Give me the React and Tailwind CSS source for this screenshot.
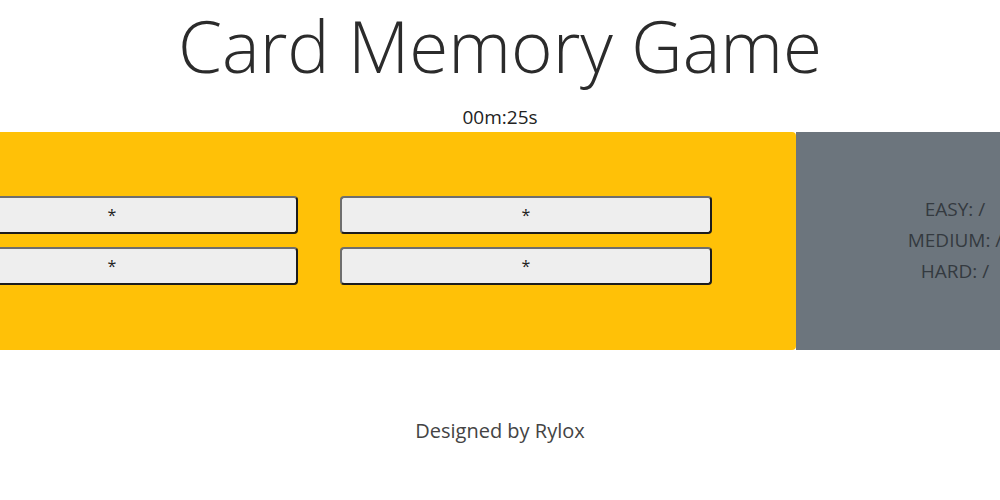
import React from 'react';

const Card = () => (
  <button className="h-[38px] w-full rounded-[4px] bg-[#eeeeee] border-2 border-t-[#6e6e6e] border-l-[#6e6e6e] border-b-[#1c1c1c] border-r-[#1c1c1c] text-[16px] text-[#222] flex items-center justify-center">
    *
  </button>
);

const App = () => {
  return (
    <div className="min-h-screen bg-white overflow-x-hidden font-['Open_Sans',sans-serif] text-[#212529]">
      <h1 className="text-center text-[71px] font-light leading-[1.25] pt-[2px] text-[#2b2b2b]">
        Card Memory Game
      </h1>
      <div className="text-center text-[19px] mt-[13px] leading-[26px] text-[#222]">00m:25s</div>

      {/* game area */}
      <div className="flex ml-[-114px] w-[1228px] h-[218px] mt-[2px]">
        <div className="w-[910px] bg-[#ffc107] rounded-[4px] pl-[40px] pr-[84px] pt-[64px]">
          <div className="grid grid-cols-2 gap-x-[42px] gap-y-[13px]">
            <Card />
            <Card />
            <Card />
            <Card />
          </div>
        </div>
        <div className="flex-1 bg-[#6c757d] flex flex-col items-center justify-center text-[19px] leading-[31px] text-[#343a40]">
          <div>EASY: /</div>
          <div>MEDIUM: /</div>
          <div>HARD: /</div>
        </div>
      </div>

      <footer className="text-center text-[20px] text-[#444] mt-[66px]">Designed by Rylox</footer>
    </div>
  );
};

export default App;
